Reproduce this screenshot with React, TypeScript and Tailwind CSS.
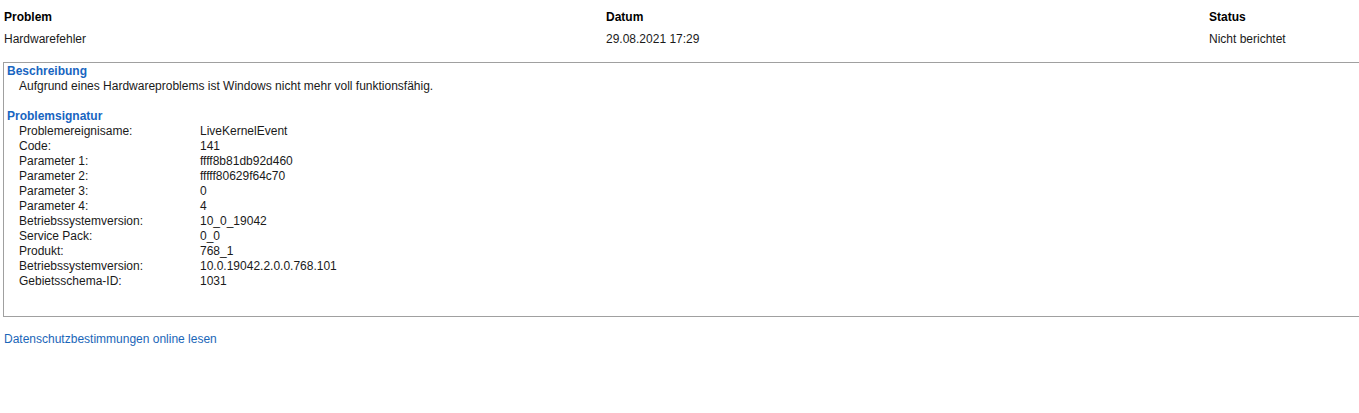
import React from "react";

const rows: [string, string][] = [
  ["Problemereignisame:", "LiveKernelEvent"],
  ["Code:", "141"],
  ["Parameter 1:", "ffff8b81db92d460"],
  ["Parameter 2:", "fffff80629f64c70"],
  ["Parameter 3:", "0"],
  ["Parameter 4:", "4"],
  ["Betriebssystemversion:", "10_0_19042"],
  ["Service Pack:", "0_0"],
  ["Produkt:", "768_1"],
  ["Betriebssystemversion:", "10.0.19042.2.0.0.768.101"],
  ["Gebietsschema-ID:", "1031"],
];

export default function App() {
  return (
    <div
      className="w-[1359px] h-[413px] bg-white text-[12px] text-[#1a1a1a] overflow-hidden"
      style={{ fontFamily: '"Segoe UI", "Liberation Sans", Arial, sans-serif' }}
    >
      <div className="pt-[6px] pl-[4px] grid grid-cols-[602px_603px_1fr] leading-[22px]">
        <div className="font-bold text-black">Problem</div>
        <div className="font-bold text-black">Datum</div>
        <div className="font-bold text-black">Status</div>
        <div>Hardwarefehler</div>
        <div>29.08.2021 17:29</div>
        <div>Nicht berichtet</div>
      </div>
      <div className="mt-[12px] ml-[3px] w-[1360px] h-[255px] border border-r-0 border-[#a0a0a0] pt-px pl-[3px] leading-[15px]">
        <div className="font-bold text-[#1865c1]">Beschreibung</div>
        <div className="pl-[12px]">Aufgrund eines Hardwareproblems ist Windows nicht mehr voll funktionsfähig.</div>
        <div className="mt-[15px] font-bold text-[#1865c1]">Problemsignatur</div>
        <div className="pl-[12px] grid grid-cols-[181px_1fr]">
          {rows.map(([k, v], i) => (
            <React.Fragment key={i}>
              <div>{k}</div>
              <div>{v}</div>
            </React.Fragment>
          ))}
        </div>
      </div>
      <div className="mt-[14px] pl-[4px] leading-[16px] text-[#1a66b8]">
        Datenschutzbestimmungen online lesen
      </div>
    </div>
  );
}
